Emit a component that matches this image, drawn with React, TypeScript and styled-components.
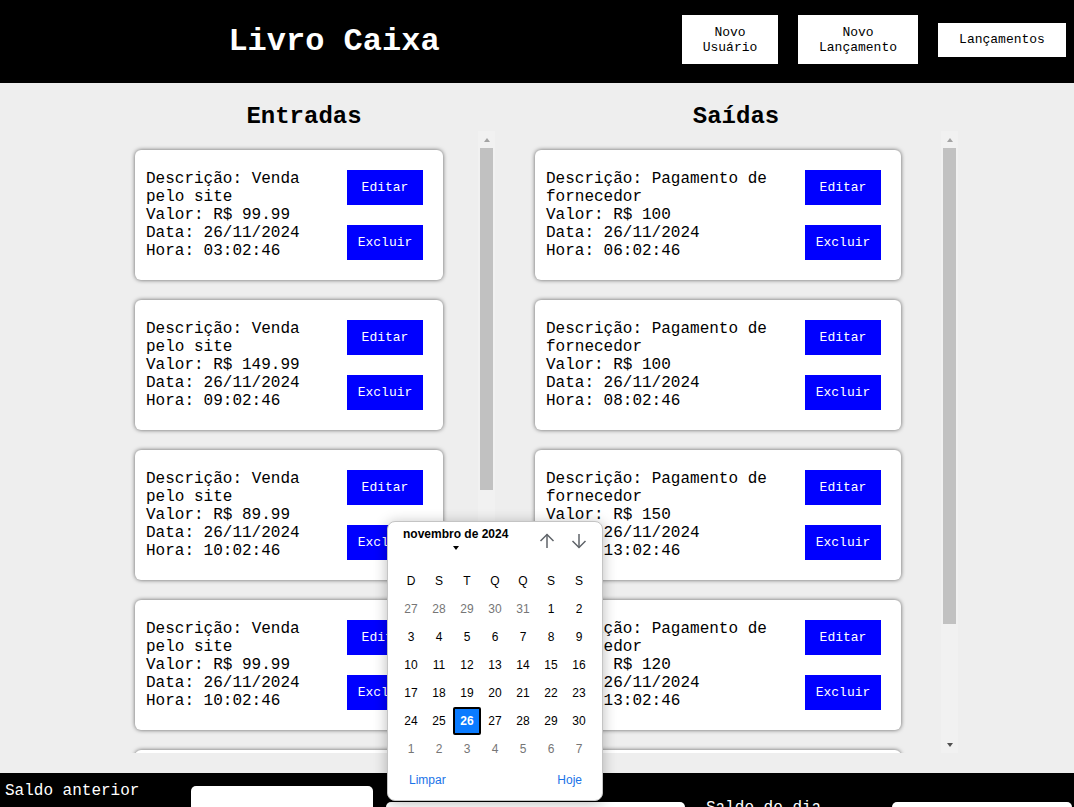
import React from 'react';
import styled, { createGlobalStyle } from 'styled-components';

const GlobalStyle = createGlobalStyle`
  html, body {
    margin: 0;
    padding: 0;
    overflow: hidden;
  }
  body {
    font-family: "Liberation Mono", "Courier New", monospace;
    background: #000;
  }
`;

const LIST_HEIGHT = 622;
const LIST_PADDING = 19;
const CARD_STEP = 150; // card 130 + margin 20
const ARROW_SIZE = 17;

const Page = styled.div`
  position: relative;
  height: 100vh;
  display: flex;
  flex-direction: column;
  overflow: hidden;
`;

const Header = styled.header`
  height: 83px;
  flex-shrink: 0;
  background: #000;
  display: grid;
  grid-template-columns: 668px 1fr;
  align-items: center;
`;

const Title = styled.h1`
  margin: 0;
  color: #fff;
  font-size: 32px;
  line-height: 36px;
  font-weight: bold;
  text-align: center;
`;

const Nav = styled.nav`
  display: flex;
  justify-content: flex-end;
  align-items: center;
  gap: 20px;
  padding-right: 8px;
  margin-bottom: 4px;
`;

const NavButton = styled.button<{ $width: number }>`
  box-sizing: border-box;
  width: ${p => p.$width}px;
  padding: 9.5px 20px;
  border: none;
  background: #fff;
  color: #000;
  font-family: inherit;
  font-size: 13px;
  line-height: 15px;
  text-align: center;
  cursor: pointer;
`;

const Main = styled.main`
  height: 690px;
  flex-shrink: 0;
  box-sizing: border-box;
  padding-right: 3px;
  background: #eee;
  display: flex;
  justify-content: center;
  gap: 19px;
`;

const Column = styled.section<{ $width: number }>`
  width: ${p => p.$width}px;
  display: flex;
  flex-direction: column;
`;

const ColumnTitle = styled.h2`
  margin: 20px 0 0;
  font-size: 24px;
  line-height: 28px;
  font-weight: bold;
  text-align: center;
  color: #000;
`;

const ListFrame = styled.div`
  height: ${LIST_HEIGHT}px;
  display: flex;
`;

const ListViewport = styled.div`
  flex: 1;
  box-sizing: border-box;
  padding-top: ${LIST_PADDING}px;
  overflow: hidden;
`;

/* classic windows-style scrollbar */
const ScrollTrack = styled.div`
  width: 17px;
  flex-shrink: 0;
  background: #f1f1f1;
  display: flex;
  flex-direction: column;
`;

const ScrollButton = styled.div<{ $down?: boolean }>`
  height: ${ARROW_SIZE}px;
  display: flex;
  align-items: center;
  justify-content: center;

  &::after {
    content: '';
    width: 0;
    height: 0;
    border-left: 3.5px solid transparent;
    border-right: 3.5px solid transparent;
    ${p => (p.$down ? 'border-top: 4px solid #505050;' : 'border-bottom: 4px solid #a3a3a3;')}
  }
`;

const ScrollArea = styled.div`
  flex: 1;
  padding: 0 2px;
`;

const ScrollThumb = styled.div`
  background: #c1c1c1;
`;

const Card = styled.div<{ $width: number; $offset: number }>`
  box-sizing: border-box;
  width: ${p => p.$width}px;
  margin: 0 0 20px ${p => p.$offset}px;
  padding: 20px 20px 20px 11px;
  background: #fff;
  border-radius: 6px;
  box-shadow: 0 0 4px rgba(0, 0, 0, 0.6);
  display: flex;
  align-items: center;
`;

const CardText = styled.div`
  flex: 1;
  padding-right: 10px;
  font-size: 16px;
  line-height: 18px;
  color: #000;
`;

const CardActions = styled.div`
  width: 76px;
  flex-shrink: 0;
  display: flex;
  flex-direction: column;
  gap: 20px;
`;

const ActionButton = styled.button`
  padding: 10px 0;
  border: none;
  background: #0000ff;
  color: #fff;
  font-family: inherit;
  font-size: 13px;
  line-height: 15px;
  text-align: center;
  cursor: pointer;
`;

const Footer = styled.footer`
  flex: 1;
  background: #000;
  display: flex;
  align-items: flex-start;
  padding: 9px 0 0 5px;
  overflow: hidden;
`;

const FooterLabel = styled.span<{ $top: number; $left: number }>`
  width: 186px;
  flex-shrink: 0;
  margin: ${p => p.$top}px 0 0 ${p => p.$left}px;
  color: #fff;
  font-size: 16px;
  line-height: 18px;
`;

const FooterInput = styled.input<{ $width: number; $top: number; $left: number }>`
  box-sizing: border-box;
  width: ${p => p.$width}px;
  height: 40px;
  flex-shrink: 0;
  margin: ${p => p.$top}px 0 0 ${p => p.$left}px;
  border: none;
  border-radius: 5px;
  background: #fff;
  font-family: inherit;
`;

/* date picker popup, open over the page */
const Picker = styled.div`
  position: absolute;
  left: 387px;
  top: 521px;
  width: 216px;
  height: 280px;
  box-sizing: border-box;
  padding: 0 9px;
  background: #fff;
  border: 1px solid #c4c4c4;
  border-radius: 8px;
  box-shadow: 0 2px 14px rgba(0, 0, 0, 0.28);
  font-family: "Liberation Sans", Arial, sans-serif;
  display: flex;
  flex-direction: column;
`;

const PickerHeader = styled.div`
  height: 45px;
  display: flex;
  justify-content: space-between;
  align-items: flex-start;
`;

const MonthToggle = styled.div`
  margin: 5px 0 0 6px;
  display: flex;
  flex-direction: column;
  align-items: center;
`;

const MonthLabel = styled.span`
  font-size: 12px;
  line-height: 15px;
  font-weight: bold;
  color: #000;
`;

const Caret = styled.span`
  margin-top: 4px;
  width: 0;
  height: 0;
  border-left: 3.5px solid transparent;
  border-right: 3.5px solid transparent;
  border-top: 4px solid #000;
`;

const StepButtons = styled.div`
  margin: 7px 2px 0 0;
  display: flex;
  gap: 8px;
`;

const StepButton = styled.span`
  width: 24px;
  height: 24px;
  display: flex;
  align-items: center;
  justify-content: center;
`;

const DayGrid = styled.div`
  display: grid;
  grid-template-columns: repeat(7, 28px);
  grid-auto-rows: 28px;
`;

const WeekDay = styled.span`
  display: flex;
  align-items: center;
  justify-content: center;
  font-size: 12px;
  color: #000;
`;

const Day = styled.span<{ $muted?: boolean; $selected?: boolean }>`
  box-sizing: border-box;
  display: flex;
  align-items: center;
  justify-content: center;
  font-size: 12px;
  color: ${p => (p.$selected ? '#fff' : p.$muted ? '#767676' : '#000')};
  font-weight: ${p => (p.$selected ? 'bold' : 'normal')};
  background: ${p => (p.$selected ? '#0a7bff' : 'transparent')};
  border: ${p => (p.$selected ? '2px solid #000' : 'none')};
  border-radius: 2px;
`;

const PickerFooter = styled.div`
  margin-top: 7px;
  padding: 0 11px 0 12px;
  display: flex;
  justify-content: space-between;
  font-size: 12px;
  line-height: 20px;
  color: #1a73e8;
`;

interface Lancamento {
  descricao: string;
  valor: string;
  data: string;
  hora: string;
}

const entradas: Lancamento[] = [
  { descricao: 'Venda pelo site', valor: '99.99', data: '26/11/2024', hora: '03:02:46' },
  { descricao: 'Venda pelo site', valor: '149.99', data: '26/11/2024', hora: '09:02:46' },
  { descricao: 'Venda pelo site', valor: '89.99', data: '26/11/2024', hora: '10:02:46' },
  { descricao: 'Venda pelo site', valor: '99.99', data: '26/11/2024', hora: '10:02:46' },
  { descricao: 'Venda pelo site', valor: '199.99', data: '26/11/2024', hora: '12:02:46' },
  { descricao: 'Venda pelo site', valor: '49.99', data: '26/11/2024', hora: '15:02:46' },
  { descricao: 'Venda pelo site', valor: '129.99', data: '26/11/2024', hora: '18:02:46' },
];

const saidas: Lancamento[] = [
  { descricao: 'Pagamento de fornecedor', valor: '100', data: '26/11/2024', hora: '06:02:46' },
  { descricao: 'Pagamento de fornecedor', valor: '100', data: '26/11/2024', hora: '08:02:46' },
  { descricao: 'Pagamento de fornecedor', valor: '150', data: '26/11/2024', hora: '13:02:46' },
  { descricao: 'Pagamento de fornecedor', valor: '120', data: '26/11/2024', hora: '13:02:46' },
  { descricao: 'Pagamento de fornecedor', valor: '80', data: '26/11/2024', hora: '16:02:46' },
];

const weekDays = ['D', 'S', 'T', 'Q', 'Q', 'S', 'S'];

// november 2024, sunday first: 27..31 oct, 1..30 nov, 1..7 dec
const calendarDays = [
  ...[27, 28, 29, 30, 31].map(d => ({ d, muted: true })),
  ...Array.from({ length: 30 }, (_, i) => ({ d: i + 1, muted: false })),
  ...Array.from({ length: 7 }, (_, i) => ({ d: i + 1, muted: true })),
];

const ArrowIcon = ({ down }: { down?: boolean }) => (
  <svg width="16" height="16" viewBox="0 0 16 16" fill="none" stroke="#5f6368" strokeWidth="1.5"
    style={{ transform: down ? 'rotate(180deg)' : undefined }}>
    <path d="M8 15V1.5" />
    <path d="M1.5 8L8 1.5L14.5 8" />
  </svg>
);

const LancamentoCard = ({ item, width, offset }: { item: Lancamento; width: number; offset: number }) => (
  <Card $width={width} $offset={offset}>
    <CardText>
      Descrição: {item.descricao}
      <br />
      Valor: R$ {item.valor}
      <br />
      Data: {item.data}
      <br />
      Hora: {item.hora}
    </CardText>
    <CardActions>
      <ActionButton>Editar</ActionButton>
      <ActionButton>Excluir</ActionButton>
    </CardActions>
  </Card>
);

interface ListProps {
  items: Lancamento[];
  cardWidth: number;
  cardOffset: number;
}

const LancamentoList = ({ items, cardWidth, cardOffset }: ListProps) => {
  // thumb size follows how much of the list fits in the frame
  const contentHeight = LIST_PADDING + items.length * CARD_STEP;
  const trackHeight = LIST_HEIGHT - ARROW_SIZE * 2;
  const thumbHeight = Math.min(trackHeight, (LIST_HEIGHT / contentHeight) * trackHeight);

  return (
    <ListFrame>
      <ListViewport>
        {items.map((item, index) => (
          <LancamentoCard key={index} item={item} width={cardWidth} offset={cardOffset} />
        ))}
      </ListViewport>
      <ScrollTrack>
        <ScrollButton />
        <ScrollArea>
          <ScrollThumb style={{ height: thumbHeight }} />
        </ScrollArea>
        <ScrollButton $down />
      </ScrollTrack>
    </ListFrame>
  );
};

const App: React.FC = () => {
  return (
    <>
      <GlobalStyle />
      <Page>
        <Header>
          <Title>Livro Caixa</Title>
          <Nav>
            <NavButton $width={96}>Novo Usuário</NavButton>
            <NavButton $width={120}>Novo Lançamento</NavButton>
            <NavButton $width={128}>Lançamentos</NavButton>
          </Nav>
        </Header>

        <Main>
          <Column $width={382}>
            <ColumnTitle>Entradas</ColumnTitle>
            <LancamentoList items={entradas} cardWidth={308} cardOffset={22} />
          </Column>
          <Column $width={444}>
            <ColumnTitle>Saídas</ColumnTitle>
            <LancamentoList items={saidas} cardWidth={366} cardOffset={21} />
          </Column>
        </Main>

        <Footer>
          <FooterLabel $top={0} $left={0}>Saldo anterior</FooterLabel>
          <FooterInput $width={182} $top={4} $left={0} readOnly />
          <FooterInput $width={299} $top={20} $left={13} readOnly />
          <FooterLabel $top={17} $left={21}>Saldo do dia</FooterLabel>
          <FooterInput $width={180} $top={20} $left={0} readOnly />
        </Footer>

        <Picker>
          <PickerHeader>
            <MonthToggle>
              <MonthLabel>novembro de 2024</MonthLabel>
              <Caret />
            </MonthToggle>
            <StepButtons>
              <StepButton><ArrowIcon /></StepButton>
              <StepButton><ArrowIcon down /></StepButton>
            </StepButtons>
          </PickerHeader>
          <DayGrid>
            {weekDays.map((w, i) => (
              <WeekDay key={i}>{w}</WeekDay>
            ))}
            {calendarDays.map((day, i) => (
              <Day key={i} $muted={day.muted} $selected={!day.muted && day.d === 26}>
                {day.d}
              </Day>
            ))}
          </DayGrid>
          <PickerFooter>
            <span>Limpar</span>
            <span>Hoje</span>
          </PickerFooter>
        </Picker>
      </Page>
    </>
  );
};

export default App;
